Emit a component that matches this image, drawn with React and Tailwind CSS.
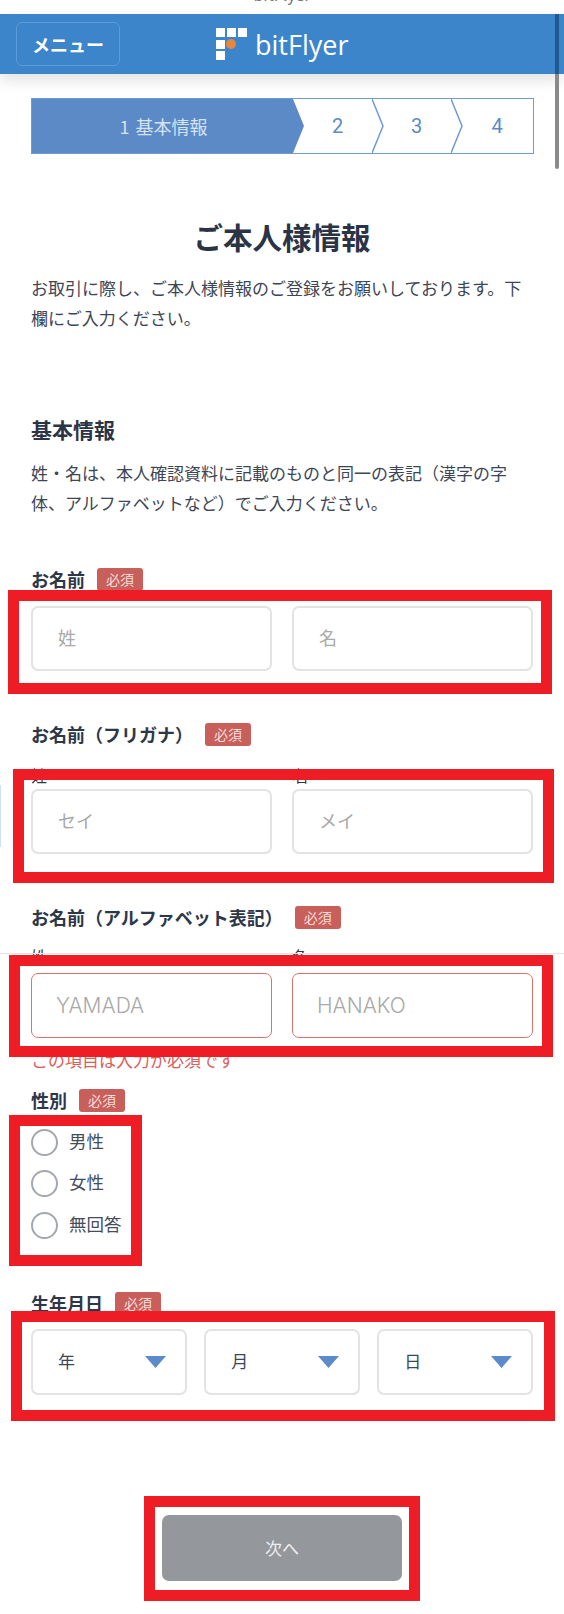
import React from 'react';

const jp = { fontFamily: '"Noto Sans CJK JP", "Noto Sans", sans-serif' };

const Badge = () => (
    <span className="ml-[12px] flex h-[23px] w-[46px] items-center justify-center rounded-[3px] bg-[#c95f5a] text-[14px] leading-none text-[#f6dedc]">
        必須
    </span>
);

const FieldLabel = ({ children, className = '' }) => (
    <div className={`flex h-[22px] items-center ${className}`}>
        <span className="text-[18px] font-bold leading-[22px] text-[#2e3748]">{children}</span>
        <Badge />
    </div>
);

const TextBox = ({ placeholder, error }) => (
    <input
        type="text"
        placeholder={placeholder}
        className={`h-[65px] w-full rounded-[7px] bg-white outline-none placeholder:text-[#a9a9a9] ${error ? 'border-[1.5px] border-[#d9736e] pl-[24px] font-["Inter"] text-[21px] font-light' : 'border-2 border-[#e3e3e3] pb-[3px] pl-[25px] text-[18px]'}`}
    />
);

const SubLabels = ({ className = '' }) => (
    <div className={`grid h-[20px] grid-cols-2 gap-[20px] text-[16px] leading-[20px] text-[#2e3748] ${className}`}>
        <span>姓</span>
        <span>名</span>
    </div>
);

const Radio = ({ label }) => (
    <label className="flex h-[26px] items-center">
        <span className="h-[27px] w-[27px] rounded-full border-2 border-[#a3a7ae] bg-white" />
        <span className="mb-[3px] ml-[11px] text-[17.5px] leading-[26px] text-[#464d5a]">{label}</span>
    </label>
);

const DateSelect = ({ label }) => (
    <div className="flex h-[66px] items-center justify-between rounded-[7px] border-2 border-[#e3e3e3] pl-[25px] pr-[19px]">
        <span className="mb-[2px] text-[17px] text-[#3d4656]">{label}</span>
        <svg width="21" height="12" viewBox="0 0 21 12">
            <path d="M0 0H21L10.5 12Z" fill="#5b8bc9" />
        </svg>
    </div>
);

const Step = ({ n, width, first }) => (
    <div className={`relative flex h-full items-center justify-center pl-[10px] text-[20px] text-[#5b8ac7] ${width}`}>
        <svg className="absolute left-0 top-0 h-full w-[12px]" viewBox="0 0 12 56" preserveAspectRatio="none">
            {first ? (
                <path d="M0 0L11 28L0 56Z" fill="#5b8ac7" />
            ) : (
                <path d="M0 0L11 28L0 56" fill="none" stroke="#6f9bd3" strokeWidth="1.5" />
            )}
        </svg>
        <span style={{ fontFamily: 'Roboto, sans-serif' }}>{n}</span>
    </div>
);

const Logo = () => (
    <div className="flex items-center">
        <svg width="32" height="32" viewBox="0 0 32 32">
            <g fill="#ffffff">
                <rect x="0" y="0" width="9" height="9" />
                <rect x="11" y="0" width="9" height="9" />
                <rect x="22" y="0" width="9" height="9" />
                <rect x="0" y="12" width="9" height="9" />
                <rect x="0" y="23" width="9" height="9" />
            </g>
            <circle cx="15" cy="16" r="5" fill="#e8863f" />
        </svg>
        <span className="ml-[7px] text-[27px] leading-none text-white" style={{ fontFamily: '"Open Sans", sans-serif' }}>
            bitFlyer
        </span>
    </div>
);

const RedBox = ({ className }) => (
    <div className={`absolute border-[11px] border-[#ee1c25] ${className}`} />
);

const App = () => {
    return (
        <div className="relative h-[1614px] w-[564px] overflow-hidden bg-white" style={jp}>
            <div className="h-[14px] overflow-hidden text-center">
                <p className="mt-[-16px] text-[16px] leading-[20px] text-[#777777]">bitFlyer</p>
            </div>

            <header className="relative flex h-[60px] items-center bg-[#3d85cb] pl-[16px] shadow-[0_6px_14px_rgba(0,0,0,0.12)]">
                <button className="h-[44px] w-[104px] rounded-[6px] border border-[#5a9ad6] text-[18px] font-bold text-white">
                    メニュー
                </button>
                <div className="ml-[96px]">
                    <Logo />
                </div>
            </header>

            <main className="px-[31px]">
                <div className="mt-[24px] flex h-[56px] w-[503px] border-[1.5px] border-[#6f9bd3]">
                    <div className="flex h-full w-[261px] items-center justify-center gap-[6px] pl-[2px] bg-[#5b8ac7] text-[18px] text-[#d5e2f2]">
                        <span>1</span>
                        <span>基本情報</span>
                    </div>
                    <Step n="2" width="w-[79px]" first />
                    <Step n="3" width="w-[79px]" />
                    <Step n="4" width="flex-1" />
                </div>

                <h1 className="mt-[62px] text-center text-[29.5px] font-bold leading-[40px] text-[#2b3445]">ご本人様情報</h1>
                <p className="mt-[17px] text-[17px] leading-[29.5px] text-[#3d4656]">
                    お取引に際し、ご本人様情報のご登録をお願いしております。下欄にご入力ください。
                </p>

                <h2 className="mt-[82px] text-[21px] font-bold leading-[30px] text-[#2b3445]">基本情報</h2>
                <p className="mt-[14px] text-[17px] leading-[29.5px] text-[#3d4656]">
                    姓・名は、本人確認資料に記載のものと同一の表記（漢字の字体、アルファベットなど）でご入力ください。
                </p>

                <FieldLabel className="mt-[51px]">お名前</FieldLabel>
                <div className="mt-[16px] grid grid-cols-2 gap-[20px]">
                    <TextBox placeholder="姓" />
                    <TextBox placeholder="名" />
                </div>

                <FieldLabel className="mt-[52px]">お名前（フリガナ）</FieldLabel>
                <SubLabels className="mt-[20px]" />
                <div className="mt-[4px] grid grid-cols-2 gap-[20px]">
                    <TextBox placeholder="セイ" />
                    <TextBox placeholder="メイ" />
                </div>

                <FieldLabel className="mt-[52px]">お名前（アルファベット表記）</FieldLabel>
                <SubLabels className="mt-[18px]" />
                <div className="mt-[7px] grid grid-cols-2 gap-[20px]">
                    <TextBox placeholder="YAMADA" error />
                    <TextBox placeholder="HANAKO" error />
                </div>
                <p className="mt-[11px] text-[17px] leading-[22px] text-[#d9605a]">この項目は入力が必須です</p>

                <FieldLabel className="mt-[18px]">性別</FieldLabel>
                <div className="mt-[18px] flex flex-col gap-[15.5px]">
                    <Radio label="男性" />
                    <Radio label="女性" />
                    <Radio label="無回答" />
                </div>

                <FieldLabel className="mt-[54px]">生年月日</FieldLabel>
                <div className="mt-[15px] grid grid-cols-3 gap-[17.5px]">
                    <DateSelect label="年" />
                    <DateSelect label="月" />
                    <DateSelect label="日" />
                </div>

                <div className="mt-[120px] flex justify-center">
                    <button className="h-[66px] w-[240px] rounded-[7px] bg-[#94979c] text-[17px] text-[#eeeeee]">次へ</button>
                </div>
            </main>

            {/* overlays: scrollbar, stray line and the red annotation frames */}
            <div className="absolute left-[555px] top-[14px] h-[60px] w-[4px] bg-[#1f5a8f]" />
            <div className="absolute left-[555px] top-[74px] h-[95px] w-[4px] rounded-b-full bg-[#8a8a8a]" />
            <div className="absolute left-0 top-[953px] h-px w-full bg-[#e4e4e4]" />
            <div className="absolute left-0 top-[785px] h-[62px] w-px bg-[#cfe2f3]" />

            <RedBox className="left-[8px] top-[590px] h-[104px] w-[544px]" />
            <RedBox className="left-[13px] top-[769px] h-[114px] w-[541px]" />
            <RedBox className="left-[9px] top-[955px] h-[102px] w-[544px]" />
            <RedBox className="left-[9px] top-[1115px] h-[151px] w-[133px]" />
            <RedBox className="left-[11px] top-[1311px] h-[110px] w-[544px]" />
            <RedBox className="left-[144px] top-[1496px] h-[105px] w-[276px]" />
        </div>
    );
};

export default App;
